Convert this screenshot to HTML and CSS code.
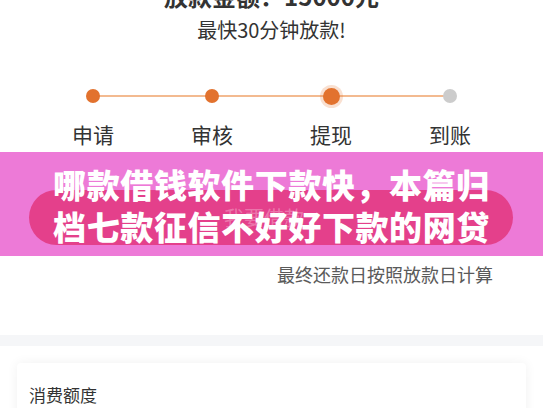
FILE: index.html
```html
<!DOCTYPE html>
<html lang="zh-CN">
  <head>
    <meta charset="UTF-8" />
    <meta name="viewport" content="width=device-width, initial-scale=1.0" />
    <title>借款进度</title>
    <link rel="stylesheet" href="styles.css">
  </head>
  <body>
    <section class="summary">
      <h2 class="amount">放款金额：15000元</h2>
      <p class="speed">最快30分钟放款!</p>
    </section>

    <section class="progress">
      <div class="track">
        <div class="step"><span class="dot done"></span></div>
        <div class="step"><span class="dot done"></span></div>
        <div class="step"><span class="dot current"></span></div>
        <div class="step"><span class="dot"></span></div>
      </div>
      <div class="labels">
        <span>申请</span>
        <span>审核</span>
        <span>提现</span>
        <span>到账</span>
      </div>
    </section>

    <section class="banner">
      <button class="apply-btn" type="button">我要借款</button>
      <h1 class="headline">哪款借钱软件下款快，本篇归<br />档七款征信不好好下款的网贷</h1>
    </section>

    <p class="note">最终还款日按照放款日计算</p>

    <div class="divider"></div>

    <section class="card">
      <h3 class="card-title">消费额度</h3>
    </section>
  </body>
</html>
```

FILE: styles.css
```css
:root {
  --text-color: #333333;
  --muted-color: #5a5a5a;
  --orange: #e2722e;
  --orange-light: #f3ba90;
  --gray-dot: #cccccc;
  --banner-bg: #ed7ad7;
  --pill-bg: #e4408b;
  --divider-bg: #f5f6f8;
}

body {
  margin: 0;
  background: #ffffff;
  color: var(--text-color);
  font-family: "Noto Sans CJK SC", "Noto Sans", sans-serif;
}

h1,
h2,
h3,
p {
  margin: 0;
}

.summary {
  text-align: center;
}

.amount {
  margin-top: -19px;
  font-size: 24px;
  line-height: 30px;
  font-weight: 700;
  color: var(--text-color);
}

.speed {
  margin-top: 7px;
  font-size: 20px;
  line-height: 24px;
}

.progress {
  width: 476px;
  margin: 43px auto 0;
}

.track {
  position: relative;
  display: grid;
  grid-template-columns: repeat(4, 1fr);
  height: 22px;
}

.track::before {
  content: "";
  position: absolute;
  left: 12.5%;
  right: 12.5%;
  top: 10px;
  height: 2px;
  background: var(--orange-light);
}

.step {
  position: relative;
  display: flex;
  align-items: center;
  justify-content: center;
}

.dot {
  width: 14px;
  height: 14px;
  border-radius: 50%;
  background: var(--gray-dot);
}

.dot.done {
  background: var(--orange);
}

.dot.current {
  width: 17px;
  height: 17px;
  background: var(--orange);
  box-shadow: 0 0 0 3px rgba(226, 114, 46, 0.22);
}

.labels {
  display: grid;
  grid-template-columns: repeat(4, 1fr);
  margin-top: 13px;
  text-align: center;
  font-size: 21px;
  line-height: 28px;
}

.banner {
  position: relative;
  margin-top: 4px;
  padding: 38px 30px 11px 29px;
  background: var(--banner-bg);
}

.apply-btn {
  display: block;
  width: 100%;
  height: 55px;
  border: none;
  border-radius: 28px;
  background: var(--pill-bg);
  color: rgba(255, 255, 255, 0.3);
  font-family: inherit;
  font-size: 20px;
  padding-right: 20px;
}

.headline {
  position: absolute;
  top: 11px;
  left: 0;
  right: 0;
  text-align: center;
  color: #ffffff;
  font-size: 33px;
  line-height: 42px;
  font-weight: 900;
  letter-spacing: 0.6px;
}

.note {
  margin-top: 6px;
  padding-right: 50px;
  text-align: right;
  font-size: 18px;
  line-height: 24px;
  color: var(--muted-color);
}

.divider {
  height: 11px;
  margin-top: 49px;
  background: var(--divider-bg);
}

.card {
  margin: 17px 17px 0;
  padding: 20px 12px 30px;
  border-radius: 4px;
  background: #ffffff;
  box-shadow: 0 0 12px rgba(0, 0, 0, 0.06);
}

.card-title {
  font-size: 17px;
  line-height: 24px;
  font-weight: 400;
}
```
